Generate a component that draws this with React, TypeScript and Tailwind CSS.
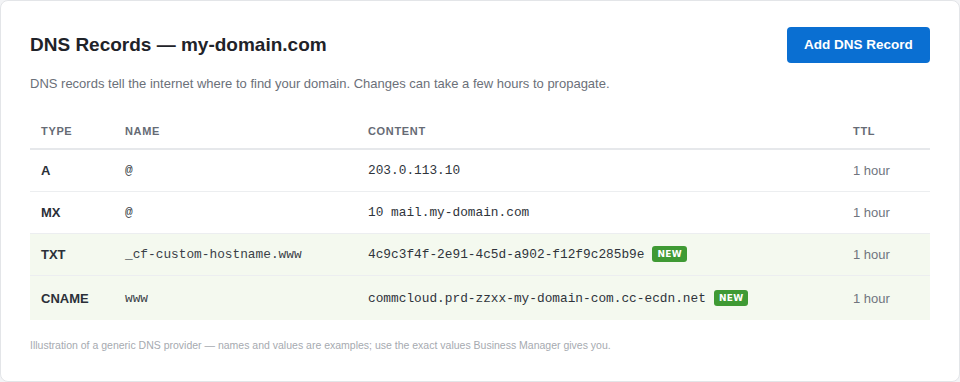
import React from "react";

const rows = [
  { type: "A", name: "@", content: "203.0.113.10", ttl: "1 hour", isNew: false },
  { type: "MX", name: "@", content: "10 mail.my-domain.com", ttl: "1 hour", isNew: false },
  { type: "TXT", name: "_cf-custom-hostname.www", content: "4c9c3f4f-2e91-4c5d-a902-f12f9c285b9e", ttl: "1 hour", isNew: true },
  { type: "CNAME", name: "www", content: "commcloud.prd-zzxx-my-domain-com.cc-ecdn.net", ttl: "1 hour", isNew: true },
];

export default function App() {
  return (
    <div className="w-[960px] h-[382px] bg-[#f3f4f6] font-['Liberation_Sans',Arial,sans-serif]">
      <div className="h-[382px] bg-white border border-[#e3e5e8] rounded-[8px] px-[29px] pt-[26px]">
        <div className="flex items-center justify-between">
          <h1 className="text-[19px] font-bold text-[#1f2329] leading-[24px]">DNS Records — my-domain.com</h1>
          <button className="h-[36px] w-[143px] rounded-[4px] bg-[#0a6fd2] text-white text-[13.5px] font-bold">
            Add DNS Record
          </button>
        </div>
        <p className="mt-[11px] text-[13px] leading-[20px] text-[#6b7079]">
          DNS records tell the internet where to find your domain. Changes can take a few hours to propagate.
        </p>
        <table className="mt-[18px] w-full table-fixed border-collapse">
          <colgroup>
            <col className="w-[84px]" />
            <col className="w-[243px]" />
            <col className="w-[485px]" />
            <col />
          </colgroup>
          <thead>
            <tr className="border-b-2 border-[#e6e8eb]">
              {["Type", "Name", "Content", "TTL"].map((h) => (
                <th
                  key={h}
                  className="text-left px-[11px] pt-[12px] pb-[10px] text-[11px] leading-[14px] font-bold uppercase tracking-[0.06em] text-[#666b75]"
                >
                  {h}
                </th>
              ))}
            </tr>
          </thead>
          <tbody>
            {rows.map((r, i) => {
              const last = i === rows.length - 1;
              const pad = last ? "px-[11px] py-[13.5px]" : "px-[11px] py-[12px]";
              return (
                <tr
                  key={r.type}
                  className={`${!last ? "border-b border-[#eceef0]" : ""} ${r.isNew ? "bg-[#f4f9ef]" : ""}`}
                >
                  <td className={`${pad} text-[13px] leading-[17px] font-bold text-[#2b3038]`}>{r.type}</td>
                  <td className={`${pad} text-[12.8px] leading-[17px] text-[#3a3f47] font-['Liberation_Mono','Courier_New',monospace]`}>
                    {r.name}
                  </td>
                  <td className={`${pad} text-[12.8px] leading-[17px] text-[#2f343b] font-['Liberation_Mono','Courier_New',monospace] whitespace-nowrap`}>
                    {r.content}
                    {r.isNew && (
                      <span className="ml-[8px] inline-block align-[1px] rounded-[3px] bg-[#3f9a34] px-[5px] py-[1px] text-[9px] leading-[14px] font-bold tracking-[0.03em] text-white font-['DejaVu_Sans',sans-serif]">
                        NEW
                      </span>
                    )}
                  </td>
                  <td className={`${pad} text-[13px] leading-[17px] text-[#70757e]`}>{r.ttl}</td>
                </tr>
              );
            })}
          </tbody>
        </table>
        <p className="mt-[18px] text-[10.5px] leading-[14px] text-[#a6aab0]">
          Illustration of a generic DNS provider — names and values are examples; use the exact values Business Manager gives you.
        </p>
      </div>
    </div>
  );
}
